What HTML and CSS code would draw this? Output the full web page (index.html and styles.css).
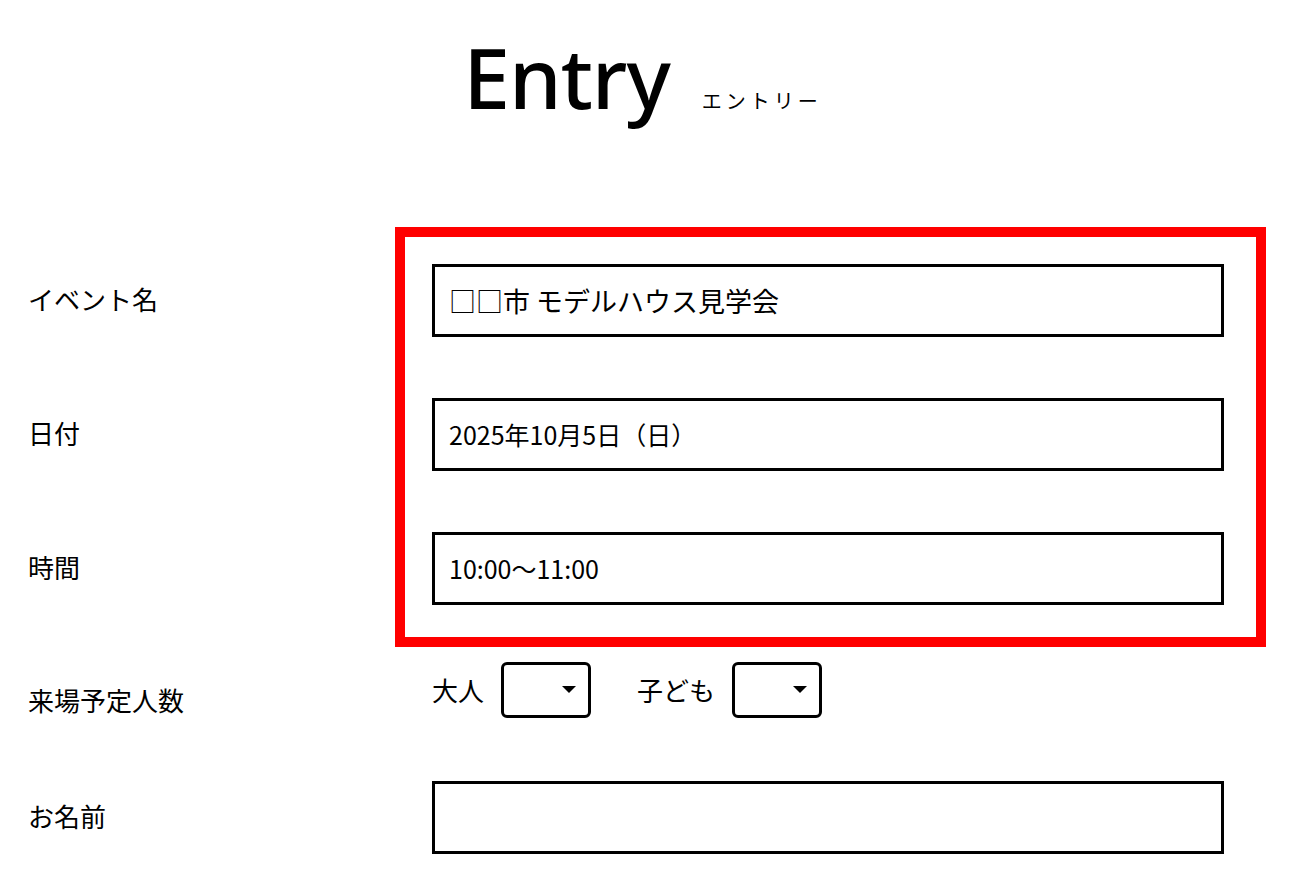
FILE: index.html
```html
<!DOCTYPE html>
<html lang="ja">
<head>
  <meta charset="UTF-8" />
  <title>Entry</title>
  <meta name="viewport" content="width=device-width, initial-scale=1.0" />
  <link rel="stylesheet" href="styles.css">
</head>
<body>

  <header class="page-head">
    <h1>Entry</h1>
    <span class="sub">エントリー</span>
  </header>

  <form class="entry-form">
    <div class="highlight"></div>

    <label class="label row-1">イベント名</label>
    <div class="field row-1"><input type="text" class="big" value="□□市 モデルハウス見学会" /></div>

    <label class="label row-2">日付</label>
    <div class="field row-2"><input type="text" value="2025年10月5日（日）" /></div>

    <label class="label row-3">時間</label>
    <div class="field row-3"><input type="text" value="10:00〜11:00" /></div>

    <label class="label label-low row-4">来場予定人数</label>
    <div class="field count row-4">
      <span>大人</span>
      <span class="select-wrap"><select><option></option></select></span>
      <span class="count-kid">子ども</span>
      <span class="select-wrap"><select><option></option></select></span>
    </div>

    <label class="label row-5">お名前</label>
    <div class="field row-5"><input type="text" value="" /></div>
  </form>

</body>
</html>
```

FILE: styles.css
```css
* {
  margin: 0;
  padding: 0;
  box-sizing: border-box;
}

body {
  font-family: "Noto Sans CJK JP", "Noto Sans", sans-serif;
  background: #fff;
  color: #000;
}

.page-head {
  display: flex;
  justify-content: center;
  align-items: baseline;
  gap: 32px;
  padding-top: 27px;
  padding-right: 16px;
}

.page-head h1 {
  font-family: "Noto Sans", sans-serif;
  font-weight: 500;
  font-size: 84px;
  line-height: 1.2;
  letter-spacing: -1px;
}

.page-head .sub {
  font-size: 20px;
  letter-spacing: 4px;
}

.entry-form {
  display: grid;
  grid-template-columns: 404px 792px;
  grid-template-rows: 73px 73px 73px 54px 73px;
  row-gap: 61px;
  margin-top: 136px;
  padding-left: 28px;
}

.row-1 { grid-row: 1; }
.row-2 { grid-row: 2; }
.row-3 { grid-row: 3; }
.row-4 { grid-row: 4; }
.row-5 { grid-row: 5; }

.highlight {
  grid-column: 2;
  grid-row: 1 / 4;
  margin: -37px -42px -42px -37px;
  border: 10px solid #f00;
  pointer-events: none;
}

.label {
  grid-column: 1;
  align-self: center;
  font-size: 26px;
  margin-top: -3px;
}

.label-low {
  margin-top: 14px;
}

.field {
  grid-column: 2;
  display: flex;
  align-items: center;
}

.field input {
  width: 100%;
  height: 100%;
  border: 3px solid #000;
  border-radius: 0;
  padding: 0 14px;
  font-family: inherit;
  font-size: 25px;
  color: #000;
  background: #fff;
}

.field input.big {
  font-size: 27px;
}

.count {
  align-self: start;
  margin-top: -4px;
  font-size: 26px;
}

.count-kid {
  margin-left: 46px;
}

.select-wrap {
  position: relative;
  margin-left: 17px;
  width: 90px;
  height: 56px;
}

.select-wrap select {
  appearance: none;
  width: 100%;
  height: 100%;
  border: 3px solid #000;
  border-radius: 6px;
  background: #fff;
}

.select-wrap::after {
  content: "";
  position: absolute;
  right: 15px;
  top: 24px;
  border-left: 7px solid transparent;
  border-right: 7px solid transparent;
  border-top: 7px solid #000;
  pointer-events: none;
}
```
